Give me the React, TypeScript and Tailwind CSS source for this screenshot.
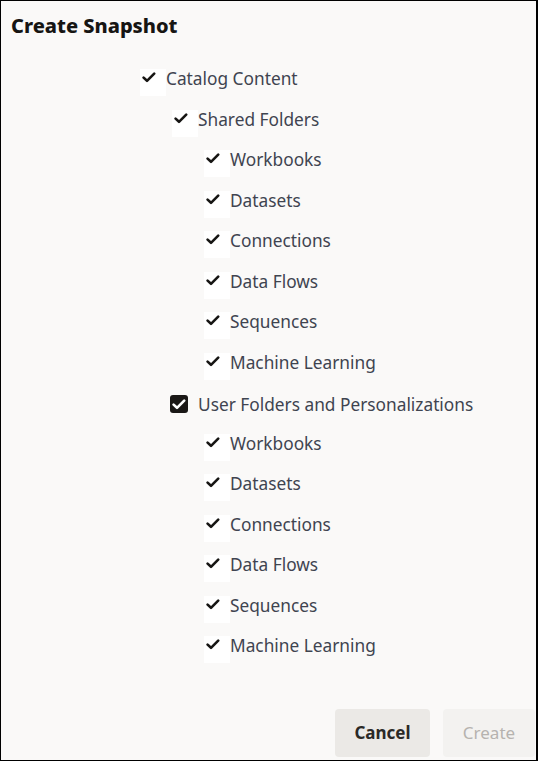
import React from 'react';

type Item = { label: string; boxed?: boolean; children?: Item[] };

const sub = (): Item[] => [
  { label: 'Workbooks' },
  { label: 'Datasets' },
  { label: 'Connections' },
  { label: 'Data Flows' },
  { label: 'Sequences' },
  { label: 'Machine Learning' },
];

const tree: Item[] = [
  {
    label: 'Catalog Content',
    children: [
      { label: 'Shared Folders', children: sub() },
      { label: 'User Folders and Personalizations', boxed: true, children: sub() },
    ],
  },
];

function Check({ color = '#161513' }: { color?: string }) {
  return (
    <svg width="14" height="11" viewBox="0 0 14 11" fill="none">
      <path d="M1.6 5.6 L5 8.8 L12.2 1.6" stroke={color} strokeWidth="2.6" strokeLinecap="round" strokeLinejoin="round" />
    </svg>
  );
}

function Row({ item }: { item: Item }) {
  return (
    <>
      <div className="flex h-[40.5px] items-start">
        {item.boxed ? (
          <div className="flex w-[26px] items-start">
            <div className="mt-[2px] -ml-[2px] flex h-[18px] w-[18px] items-center justify-center rounded-[3px] bg-[#1a1816]">
              <Check color="#ffffff" />
            </div>
          </div>
        ) : (
          <div className="h-[27px] w-[26px] bg-white pl-[2px] pt-[3px]">
            <Check />
          </div>
        )}
        <span className={`text-[17.3px] leading-[18px] text-[#3f4450] ${item.boxed ? 'mt-[3px]' : 'mt-[1px]'}`}>{item.label}</span>
      </div>
      {item.children && (
        <div className="pl-8">
          {item.children.map((c) => (
            <Row key={c.label} item={c} />
          ))}
        </div>
      )}
    </>
  );
}

export default function App() {
  return (
    <div
      className="flex h-[761px] w-[538px] flex-col border border-r-2 border-black bg-[#faf9f8]"
      style={{ fontFamily: '"Noto Sans", "Open Sans", sans-serif' }}
    >
      <h1 className="pl-[10px] pt-[11px] text-[20px] font-extrabold leading-[28px] text-[#161513]">Create Snapshot</h1>
      <div className="mt-[29px] pl-[139px]">
        {tree.map((t) => (
          <Row key={t.label} item={t} />
        ))}
      </div>
      <div className="mt-auto flex justify-end gap-[13px] pb-[3px] pr-[1px]">
        <button className="h-[48px] w-[95px] rounded-[4px] bg-[#ebe9e6] text-[17px] font-bold text-[#2b2927]">Cancel</button>
        <button className="h-[48px] w-[92px] rounded-[4px] bg-[#f3f2f0] text-[17px] text-[#b6b3af]">Create</button>
      </div>
    </div>
  );
}
